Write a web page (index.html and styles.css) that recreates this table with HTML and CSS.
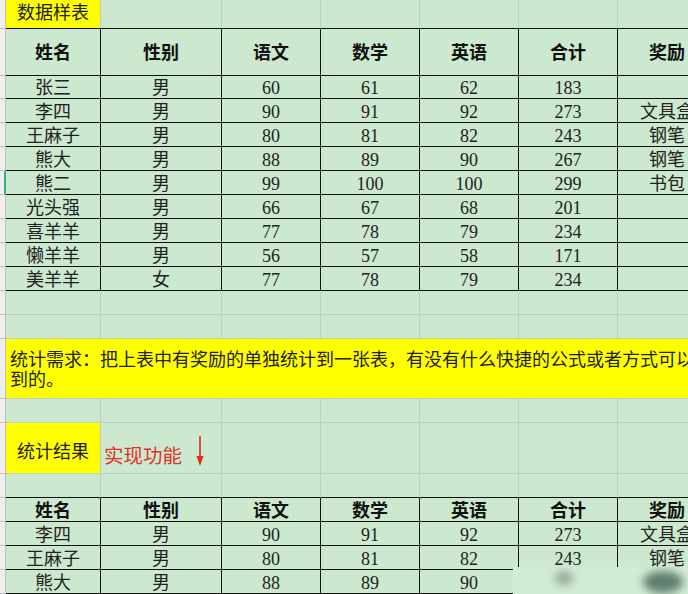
FILE: index.html
```html
<!DOCTYPE html>
<html lang="zh-CN">
<head>
<meta charset="utf-8">
<title>数据样表</title>
<link rel="stylesheet" href="styles.css">
</head>
<body>
<div class="sheet">
  <div class="row r29">
    <div class="rh"></div>
    <div class="c above yellow title">数据样表</div>
    <div class="c above"></div><div class="c above"></div><div class="c above"></div>
    <div class="c above"></div><div class="c above"></div><div class="c above"></div>
  </div>
  <div class="row r47 head">
    <div class="rh"></div>
    <div class="c t">姓名</div><div class="c t">性别</div><div class="c t">语文</div><div class="c t">数学</div>
    <div class="c t">英语</div><div class="c t">合计</div><div class="c t">奖励</div>
  </div>
  <div class="row r23">
    <div class="rh"></div>
    <div class="c t">张三</div><div class="c t">男</div><div class="c t">60</div><div class="c t">61</div>
    <div class="c t">62</div><div class="c t">183</div><div class="c t"></div>
  </div>
  <div class="row">
    <div class="rh"></div>
    <div class="c t">李四</div><div class="c t">男</div><div class="c t">90</div><div class="c t">91</div>
    <div class="c t">92</div><div class="c t">273</div><div class="c t">文具盒</div>
  </div>
  <div class="row">
    <div class="rh"></div>
    <div class="c t">王麻子</div><div class="c t">男</div><div class="c t">80</div><div class="c t">81</div>
    <div class="c t">82</div><div class="c t">243</div><div class="c t">钢笔</div>
  </div>
  <div class="row">
    <div class="rh"></div>
    <div class="c t">熊大</div><div class="c t">男</div><div class="c t">88</div><div class="c t">89</div>
    <div class="c t">90</div><div class="c t">267</div><div class="c t">钢笔</div>
  </div>
  <div class="row">
    <div class="rh sel"></div>
    <div class="c t">熊二</div><div class="c t">男</div><div class="c t">99</div><div class="c t">100</div>
    <div class="c t">100</div><div class="c t">299</div><div class="c t">书包</div>
  </div>
  <div class="row">
    <div class="rh"></div>
    <div class="c t">光头强</div><div class="c t">男</div><div class="c t">66</div><div class="c t">67</div>
    <div class="c t">68</div><div class="c t">201</div><div class="c t"></div>
  </div>
  <div class="row">
    <div class="rh"></div>
    <div class="c t">喜羊羊</div><div class="c t">男</div><div class="c t">77</div><div class="c t">78</div>
    <div class="c t">79</div><div class="c t">234</div><div class="c t"></div>
  </div>
  <div class="row">
    <div class="rh"></div>
    <div class="c t">懒羊羊</div><div class="c t">男</div><div class="c t">56</div><div class="c t">57</div>
    <div class="c t">58</div><div class="c t">171</div><div class="c t"></div>
  </div>
  <div class="row">
    <div class="rh"></div>
    <div class="c t">美羊羊</div><div class="c t">女</div><div class="c t">77</div><div class="c t">78</div>
    <div class="c t">79</div><div class="c t">234</div><div class="c t"></div>
  </div>
  <div class="row">
    <div class="rh"></div>
    <div class="c"></div><div class="c"></div><div class="c"></div><div class="c"></div>
    <div class="c"></div><div class="c"></div><div class="c"></div>
  </div>
  <div class="row">
    <div class="rh"></div>
    <div class="c"></div><div class="c"></div><div class="c"></div><div class="c"></div>
    <div class="c"></div><div class="c"></div><div class="c"></div>
  </div>
  <div class="row r60">
    <div class="rh"></div>
    <div class="c yellow wide">统计需求：把上表中有奖励的单独统计到一张表，有没有什么快捷的公式或者方式可以做<br>到的。</div>
  </div>
  <div class="row">
    <div class="rh"></div>
    <div class="c"></div><div class="c"></div><div class="c"></div><div class="c"></div>
    <div class="c"></div><div class="c"></div><div class="c"></div>
  </div>
  <div class="row r51">
    <div class="rh"></div>
    <div class="c yellow result">统计结果</div>
    <div class="c note"><span class="red">实现功能</span><svg class="arrow" width="10" height="30" viewBox="0 0 10 30"><line x1="5" y1="0" x2="5" y2="22" stroke="#e8281e" stroke-width="1.6"/><polygon points="1.5,20 8.5,20 5,30" fill="#e8281e"/></svg></div>
    <div class="c"></div><div class="c"></div>
    <div class="c"></div><div class="c"></div><div class="c"></div>
  </div>
  <div class="row">
    <div class="rh"></div>
    <div class="c above"></div><div class="c above"></div><div class="c above"></div><div class="c above"></div>
    <div class="c above"></div><div class="c above"></div><div class="c above"></div>
  </div>
  <div class="row head">
    <div class="rh"></div>
    <div class="c t">姓名</div><div class="c t">性别</div><div class="c t">语文</div><div class="c t">数学</div>
    <div class="c t">英语</div><div class="c t">合计</div><div class="c t">奖励</div>
  </div>
  <div class="row">
    <div class="rh"></div>
    <div class="c t">李四</div><div class="c t">男</div><div class="c t">90</div><div class="c t">91</div>
    <div class="c t">92</div><div class="c t">273</div><div class="c t">文具盒</div>
  </div>
  <div class="row">
    <div class="rh"></div>
    <div class="c t">王麻子</div><div class="c t">男</div><div class="c t">80</div><div class="c t">81</div>
    <div class="c t">82</div><div class="c t">243</div><div class="c t">钢笔</div>
  </div>
  <div class="row">
    <div class="rh"></div>
    <div class="c t">熊大</div><div class="c t">男</div><div class="c t">88</div><div class="c t">89</div>
    <div class="c t">90</div><div class="c t">267</div><div class="c t">钢笔</div>
  </div>
</div>
<div class="watermark">
  <span class="blob blob1"></span>
  <span class="blob blob2"></span>
</div>
</body>
</html>
```

FILE: styles.css
```css
html, body {
  margin: 0;
  padding: 0;
}
body {
  width: 688px;
  height: 594px;
  overflow: hidden;
  position: relative;
  background: #cce8cf;
  font-family: "Liberation Serif", "Noto Sans CJK SC", serif;
  font-size: 18px;
  color: #222;
}
.sheet {
  display: flex;
  flex-direction: column;
  width: 717px;
}
.row {
  display: grid;
  grid-template-columns: 6px 95px 121px 99px 99px 99px 99px 99px;
  height: 24px;
}
.r23 { height: 23px; }
.r29 { height: 29px; }
.r47 { height: 47px; }
.r51 { height: 51px; }
.r60 { height: 60px; }

.rh {
  box-sizing: border-box;
  background: #efefef;
  border-right: 1px solid #bfbfbf;
  border-bottom: 1px solid #bfbfbf;
}
.rh.sel {
  border-right: 2px solid #2fb57a;
}
.c {
  box-sizing: border-box;
  border-right: 1px solid #c3cbc5;
  border-bottom: 1px solid #c3cbc5;
  display: flex;
  align-items: center;
  justify-content: center;
  padding-top: 2px;
  line-height: 1;
  white-space: nowrap;
  overflow: visible;
}
.c.t {
  border-right-color: #111;
  border-bottom-color: #111;
}
.c.above {
  border-bottom-color: #111;
}
.head .c {
  font-weight: 700;
  color: #111;
}
.yellow {
  background: #ffff00;
}
.c.title {
  padding-top: 0;
  padding-bottom: 3px;
}
.wide {
  grid-column: 2 / -1;
  justify-content: flex-start;
  padding-left: 4px;
  line-height: 20px;
  border-right: none;
}
.c.result {
  padding-top: 7px;
}
.c.note {
  justify-content: flex-start;
  align-items: flex-end;
  padding-left: 3px;
  padding-top: 0;
  padding-bottom: 6px;
  gap: 13px;
}
.red {
  color: #e0302a;
  font-size: 19.5px;
  line-height: 20px;
}
.arrow {
  display: block;
  margin-bottom: 1px;
}
.watermark {
  position: absolute;
  left: 513px;
  top: 567px;
  width: 175px;
  height: 27px;
  background: #d2ebd5;
  overflow: hidden;
}
.blob {
  position: absolute;
  border-radius: 50%;
  filter: blur(4px);
}
.blob1 {
  left: 42px;
  top: 4px;
  width: 18px;
  height: 14px;
  background: #93a898;
}
.blob2 {
  left: 130px;
  top: 4px;
  width: 40px;
  height: 22px;
  background: #5f7e6e;
}
```
